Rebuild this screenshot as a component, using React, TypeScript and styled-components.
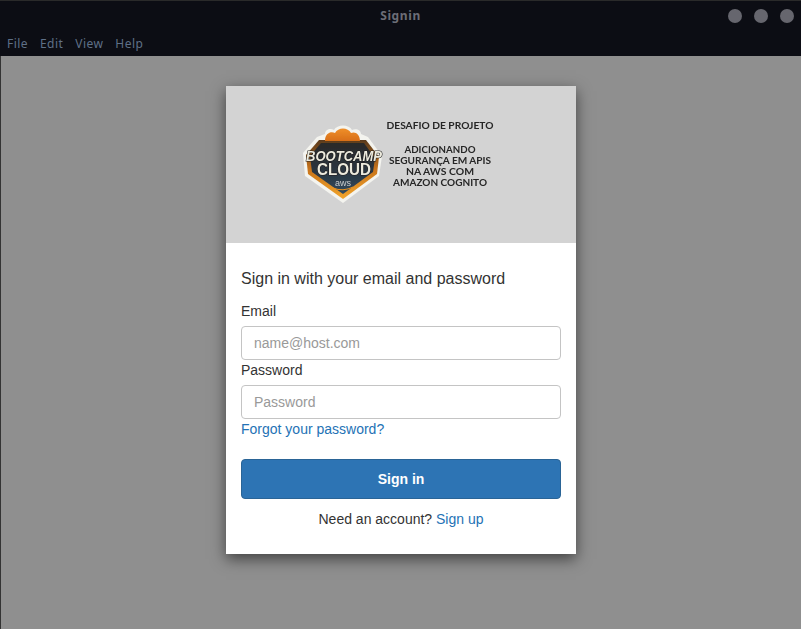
import React from "react";
import styled, { createGlobalStyle } from "styled-components";

const Global = createGlobalStyle`
  html, body { margin: 0; padding: 0; height: 100%; background: #8f8f8f; overflow: hidden; }
  #root { height: 100%; }
`;

const Window = styled.div`
  display: flex;
  flex-direction: column;
  height: 629px;
  width: 801px;
  background: #8f8f8f;
`;
const TitleBar = styled.header`
  display: grid;
  grid-template-columns: 1fr auto 1fr;
  align-items: center;
  height: 32px;
  padding: 0 7px;
  background: #0c0d14;
  border-top: 1px solid #2a2a2a;
`;
const Title = styled.div`
  grid-column: 2;
  font: bold 12px "Noto Sans", sans-serif;
  color: #6c6d77;
  letter-spacing: 0.6px;
  margin-bottom: 4px;
`;
const Controls = styled.div`
  grid-column: 3;
  justify-self: end;
  display: flex;
  gap: 12px;
  margin-bottom: 2px;
`;
const Dot = styled.span`
  width: 14px;
  height: 14px;
  border-radius: 50%;
  background: #66666e;
`;
const MenuBar = styled.nav`
  display: flex;
  gap: 12px;
  height: 23px;
  padding: 0 7px 3px;
  box-sizing: border-box;
  align-items: center;
  background: #0c0d14;
`;
const MenuItem = styled.span`
  font: 12px "Noto Sans", sans-serif;
  letter-spacing: 0.45px;
  color: #5f7087;
`;
const Stage = styled.main`
  flex: 1;
  display: flex;
  justify-content: center;
  align-items: flex-start;
  padding-top: 30px;
  border-left: 1px solid #333;
`;
const Card = styled.section`
  width: 350px;
  height: 468px;
  background: #fff;
  box-shadow: 0 5px 14px rgba(0, 0, 0, 0.55);
  display: flex;
  flex-direction: column;
`;
const Banner = styled.div`
  height: 157px;
  background: #d3d3d3;
  display: flex;
  justify-content: center;
  align-items: flex-start;
`;
const Form = styled.form`
  display: flex;
  flex-direction: column;
  padding: 25px 15px 0;
  font-family: "Liberation Sans", Arial, sans-serif;
  color: #333;
`;
const Heading = styled.h1`
  margin: 0 0 11px;
  font-size: 16px;
  line-height: 22px;
  font-weight: 400;
`;
const Label = styled.label`
  font-size: 14px;
  line-height: 20px;
  height: 20px;
  margin-bottom: 5px;
`;
const Input = styled.input`
  box-sizing: border-box;
  width: 320px;
  height: 34px;
  padding: 0 12px;
  margin-bottom: 0;
  border: 1px solid #c4c4c4;
  border-radius: 4px;
  font: 14px "Liberation Sans", Arial, sans-serif;
  background: #fff;
  &::placeholder { color: #999; opacity: 1; }
`;
const Link = styled.a`
  color: #2472b5;
  font-size: 14px;
  line-height: 20px;
  text-decoration: none;
`;
const Forgot = styled(Link)`
  display: block;
`;
const Submit = styled.button`
  margin-top: 20px;
  width: 320px;
  height: 40px;
  border: 1px solid #2a6496;
  border-radius: 4px;
  background: #2d74b4;
  color: #fff;
  font: bold 14px "Liberation Sans", Arial, sans-serif;
`;
const Footer = styled.p`
  margin: 10px 0 0;
  text-align: center;
  font-size: 14px;
  line-height: 20px;
`;
const BadgeText = styled.text`
  font-family: "Liberation Sans", Arial, sans-serif;
  font-weight: bold;
  paint-order: stroke;
`;
const CaptionText = styled.text`
  font-family: Lato, sans-serif;
  font-weight: 700;
  font-size: 9px;
  fill: #262626;
`;

function Logo() {
  const caption = [
    ["DESAFIO DE PROJETO", 43, 107],
    ["ADICIONANDO", 67, 71],
    ["SEGURANÇA EM APIS", 78, 102],
    ["NA AWS COM", 89, 68],
    ["AMAZON COGNITO", 100, 94],
  ] as const;
  return (
    <svg width="200" height="157" viewBox="0 0 200 157">
      <defs>
        <linearGradient id="bodyFill" x1="0" y1="0" x2="0" y2="1">
          <stop offset="0" stopColor="#2c2a28" />
          <stop offset="0.55" stopColor="#2a3540" />
          <stop offset="1" stopColor="#304a5e" />
        </linearGradient>
        <linearGradient id="rim" x1="0" y1="0" x2="0" y2="1">
          <stop offset="0" stopColor="#5a3a1a" />
          <stop offset="0.5" stopColor="#c9741a" />
          <stop offset="1" stopColor="#f2a52c" />
        </linearGradient>
        <linearGradient id="cloud" x1="0" y1="0" x2="0" y2="1">
          <stop offset="0" stopColor="#ef8f2a" />
          <stop offset="1" stopColor="#d86f18" />
        </linearGradient>
        <filter id="soft"><feGaussianBlur stdDeviation="0.4" /></filter>
      </defs>
      <g filter="url(#soft)">
        <path d="M16 51 L24 48 C24 43 30 42 33 44 C36 38 48 38 51 44 C55 42 60 44 60 48 L67 51 L81 70 L78 90 L42 117 L4 90 L2 67 Z" fill="#f4f4ef" />
        <path d="M18 54 L65 54 L78 71 L76 88 L42 113 L7 88 L5 69 Z" fill="url(#rim)" />
        <path d="M20 57 L63 57 L74 72 L72 86 L42 108 L11 86 L9 70 Z" fill="url(#bodyFill)" />
        <path d="M24 55 C24 47 30 45 34 47 C37 41 47 41 50 47 C54 45 59 48 59 55 Z" fill="url(#cloud)" />
        <BadgeText x="43" y="75" textAnchor="middle" fontSize="14" textLength="76" lengthAdjust="spacingAndGlyphs" fontStyle="italic" fill="#eceadd" stroke="#1f1f1f" strokeWidth="1.2">BOOTCAMP</BadgeText>
        <BadgeText x="43" y="89" textAnchor="middle" fontSize="16.5" textLength="54" lengthAdjust="spacingAndGlyphs" fill="#eceadd" stroke="#1f1f1f" strokeWidth="1.2">CLOUD</BadgeText>
        <BadgeText x="42" y="100" textAnchor="middle" fontSize="9" fill="#c9ccce" style={{ fontWeight: 400 }}>aws</BadgeText>
        <path d="M32 102 Q42 106 52 101" stroke="#e8901f" strokeWidth="1" fill="none" />
        {caption.map(([t, y, w]) => (
          <CaptionText key={t} x="139" y={y} textAnchor="middle" textLength={w} lengthAdjust="spacingAndGlyphs">{t}</CaptionText>
        ))}
      </g>
    </svg>
  );
}

export default function App() {
  return (
    <Window>
      <Global />
      <TitleBar>
        <Title>Signin</Title>
        <Controls><Dot /><Dot /><Dot /></Controls>
      </TitleBar>
      <MenuBar>
        {["File", "Edit", "View", "Help"].map((m) => <MenuItem key={m}>{m}</MenuItem>)}
      </MenuBar>
      <Stage>
        <Card>
          <Banner><Logo /></Banner>
          <Form onSubmit={(e) => e.preventDefault()}>
            <Heading>Sign in with your email and password</Heading>
            <Label htmlFor="email">Email</Label>
            <Input id="email" placeholder="name@host.com" />
            <Label htmlFor="password">Password</Label>
            <Input id="password" placeholder="Password" />
            <Forgot href="#">Forgot your password?</Forgot>
            <Submit type="submit">Sign in</Submit>
            <Footer>Need an account? <Link href="#">Sign up</Link></Footer>
          </Form>
        </Card>
      </Stage>
    </Window>
  );
}
